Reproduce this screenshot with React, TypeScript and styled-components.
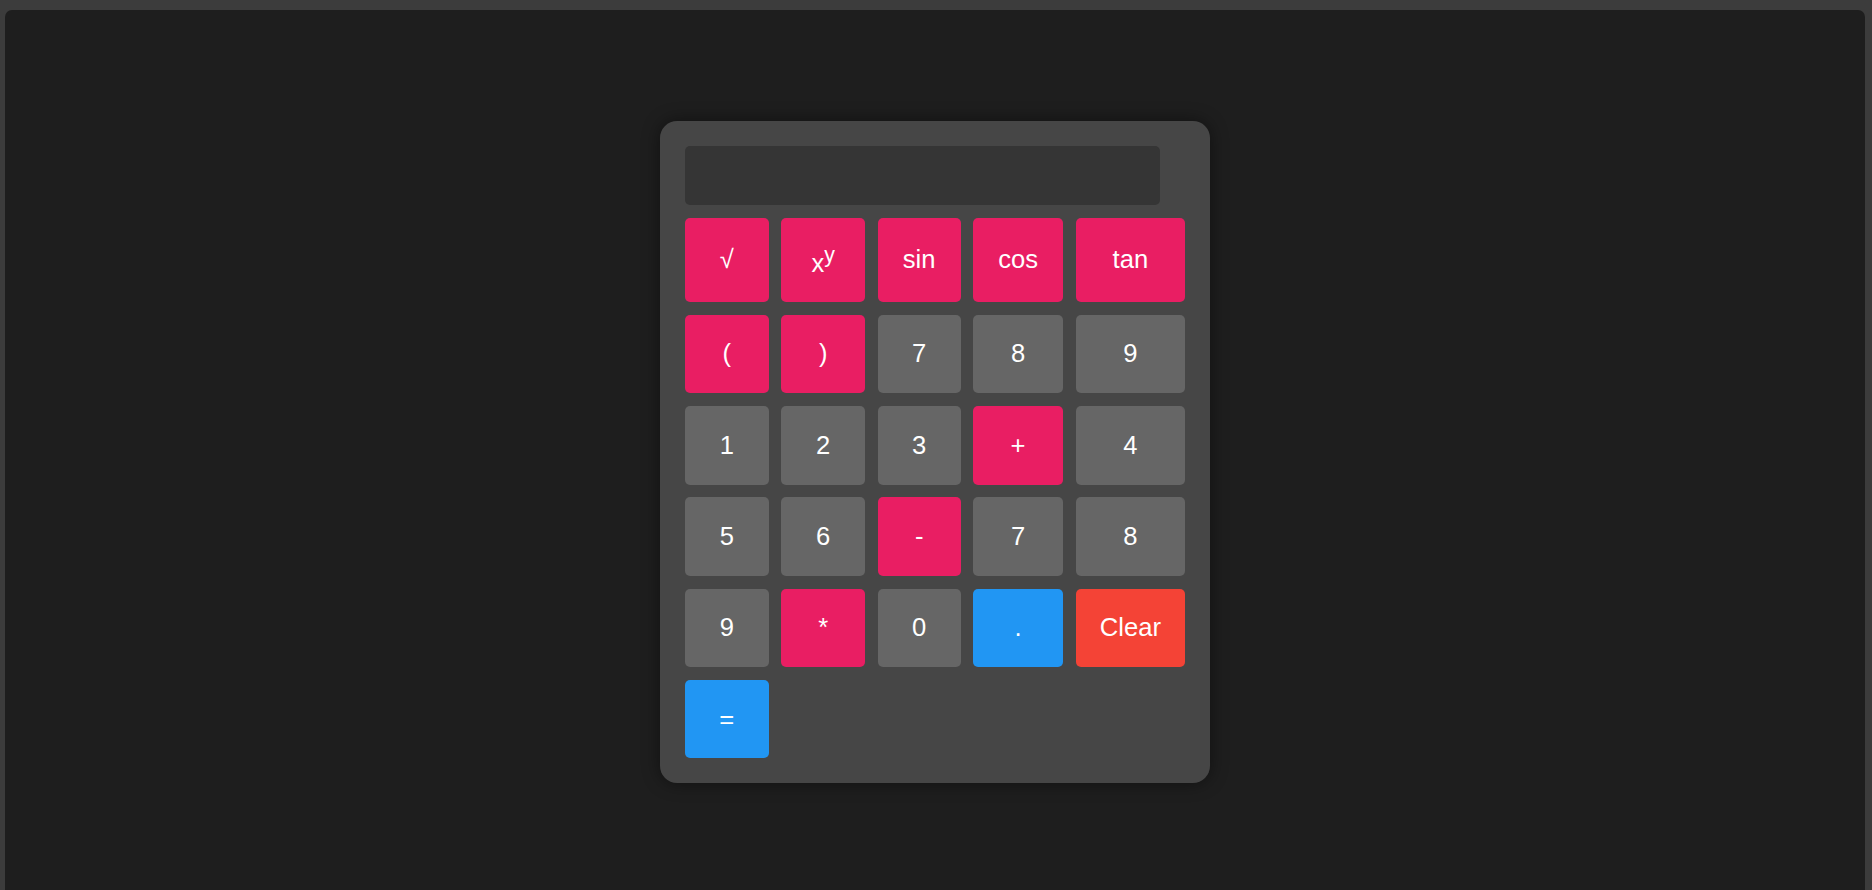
import styled, { createGlobalStyle } from "styled-components";

const GlobalStyle = createGlobalStyle`
  html, body {
    margin: 0;
    padding: 0;
    height: 100%;
    overflow: hidden;
    background: #3c3c3c;
    font-family: "Liberation Sans", Arial, sans-serif;
  }
`;

const Frame = styled.div`
  margin: 10px 7px 0 5px;
  height: 884px;
  background: #1e1e1e;
  border-radius: 7px 7px 0 0;
  display: flex;
  align-items: center;
  justify-content: center;
`;

const Calculator = styled.div`
  width: 500px;
  padding: 25px 25px 24.5px;
  background: #464646;
  border-radius: 17px;
  box-shadow: 0 0 18px rgba(0, 0, 0, 0.45);
`;

const Display = styled.div`
  width: 95%;
  height: 59px;
  background: #353535;
  border-radius: 5px;
  margin-bottom: 12.8px;
`;

const Keys = styled.div`
  display: grid;
  grid-template-columns: 83.6px 83.6px 82.8px 89.4px 109.6px;
  gap: 12.8px;
`;

type Tone = "num" | "op" | "accent" | "danger";

const toneColors: Record<Tone, string> = {
  num: "#666666",
  op: "#e91e63",
  accent: "#2196f3",
  danger: "#f44336",
};

const Key = styled.button<{ $tone: Tone }>`
  border: none;
  border-radius: 5px;
  padding: 24.75px 0;
  background: ${({ $tone }) => toneColors[$tone]};
  color: #ffffff;
  font-family: "Liberation Sans", Arial, sans-serif;
  font-size: 25.6px;
  line-height: normal;
  cursor: pointer;
`;

const keys: { label: React.ReactNode; tone: Tone }[] = [
  { label: "√", tone: "op" },
  {
    label: (
      <>
        x<sup>y</sup>
      </>
    ),
    tone: "op",
  },
  { label: "sin", tone: "op" },
  { label: "cos", tone: "op" },
  { label: "tan", tone: "op" },
  { label: "(", tone: "op" },
  { label: ")", tone: "op" },
  { label: "7", tone: "num" },
  { label: "8", tone: "num" },
  { label: "9", tone: "num" },
  { label: "1", tone: "num" },
  { label: "2", tone: "num" },
  { label: "3", tone: "num" },
  { label: "+", tone: "op" },
  { label: "4", tone: "num" },
  { label: "5", tone: "num" },
  { label: "6", tone: "num" },
  { label: "-", tone: "op" },
  { label: "7", tone: "num" },
  { label: "8", tone: "num" },
  { label: "9", tone: "num" },
  { label: "*", tone: "op" },
  { label: "0", tone: "num" },
  { label: ".", tone: "accent" },
  { label: "Clear", tone: "danger" },
  { label: "=", tone: "accent" },
];

export default function App() {
  return (
    <>
      <GlobalStyle />
      <Frame>
        <Calculator>
          <Display />
          <Keys>
            {keys.map((key, index) => (
              <Key key={index} $tone={key.tone}>
                {key.label}
              </Key>
            ))}
          </Keys>
        </Calculator>
      </Frame>
    </>
  );
}
